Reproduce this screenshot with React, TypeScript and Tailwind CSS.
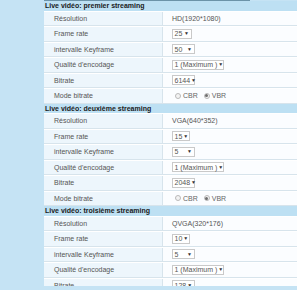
type Row =
  | { label: string; kind: "text"; value: string }
  | { label: string; kind: "select"; value: string; w: string }
  | { label: string; kind: "radio" };

type Section = { title: string; rows: Row[] };

const sections: Section[] = [
  {
    title: "Live vidéo: premier streaming",
    rows: [
      { label: "Résolution", kind: "text", value: "HD(1920*1080)" },
      { label: "Frame rate", kind: "select", value: "25", w: "w-[20px]" },
      { label: "intervalle Keyframe", kind: "select", value: "50", w: "w-[23px]" },
      { label: "Qualité d'encodage", kind: "select", value: "1 (Maximum )", w: "w-[52px]" },
      { label: "Bitrate", kind: "select", value: "6144", w: "w-[23px]" },
      { label: "Mode bitrate", kind: "radio" },
    ],
  },
  {
    title: "Live vidéo: deuxième streaming",
    rows: [
      { label: "Résolution", kind: "text", value: "VGA(640*352)" },
      { label: "Frame rate", kind: "select", value: "15", w: "w-[18px]" },
      { label: "intervalle Keyframe", kind: "select", value: "5", w: "w-[23px]" },
      { label: "Qualité d'encodage", kind: "select", value: "1 (Maximum )", w: "w-[52px]" },
      { label: "Bitrate", kind: "select", value: "2048", w: "w-[23px]" },
      { label: "Mode bitrate", kind: "radio" },
    ],
  },
  {
    title: "Live vidéo: troisième streaming",
    rows: [
      { label: "Résolution", kind: "text", value: "QVGA(320*176)" },
      { label: "Frame rate", kind: "select", value: "10", w: "w-[18px]" },
      { label: "intervalle Keyframe", kind: "select", value: "5", w: "w-[23px]" },
      { label: "Qualité d'encodage", kind: "select", value: "1 (Maximum )", w: "w-[52px]" },
      { label: "Bitrate", kind: "select", value: "128", w: "w-[23px]" },
      { label: "Mode bitrate", kind: "radio" },
    ],
  },
];

function Radio({ checked }: { checked?: boolean }) {
  return (
    <span className="w-[6px] h-[6px] rounded-full border border-[#b9b9b9] bg-[#f3f3f3] flex items-center justify-center">
      {checked && <span className="w-[3px] h-[3px] rounded-full bg-[#6f6f6f]" />}
    </span>
  );
}

function Value({ row }: { row: Row }) {
  if (row.kind === "text") return <span className="text-[#555] whitespace-nowrap">{row.value}</span>;
  if (row.kind === "select")
    return (
      <span
        className={`${row.w} h-[10px] border border-[#c9c9c9] bg-white flex items-center justify-between gap-[1px] pl-[1.5px] pr-[2px] text-[#555] whitespace-nowrap`}
      >
        <span>{row.value}</span>
        <span className="text-[5px] text-[#333]">▼</span>
      </span>
    );
  return (
    <span className="flex items-center gap-[2px] pl-[3px] text-[#666]">
      <Radio />
      <span>CBR</span>
      <span className="ml-[2px]" />
      <Radio checked />
      <span>VBR</span>
    </span>
  );
}

export default function App() {
  return (
    <div
      className="w-[297px] h-[290px] bg-[#c5e3f4] overflow-hidden flex text-[7px] leading-none"
      style={{ fontFamily: '"Liberation Sans", Arial, sans-serif' }}
    >
      <div className="w-[44px] shrink-0" />
      <div className="flex-1 h-[286px] overflow-hidden flex flex-col">
        <div className="h-[1px] w-[206px] bg-[#6c93a8] shrink-0" />
        {sections.map((s) => (
          <div key={s.title} className="flex flex-col shrink-0">
            <div className="h-[9.5px] bg-[#bde0f3] flex items-center font-bold text-[#1a1a1a] pl-[1px] whitespace-nowrap">
              {s.title}
            </div>
            {s.rows.map((r) => (
              <div key={r.label} className="h-[15.5px] flex border-b border-[#d7e4ec] border-t border-t-white">
                <div className="w-[119px] bg-[#edf6fc] border-r border-[#d7e4ec] flex items-center pl-[10px] text-[#555] whitespace-nowrap">
                  {r.label}
                </div>
                <div className="flex-1 bg-[#fbfdff] flex items-center pl-[9px]">
                  <Value row={r} />
                </div>
              </div>
            ))}
          </div>
        ))}
      </div>
    </div>
  );
}
